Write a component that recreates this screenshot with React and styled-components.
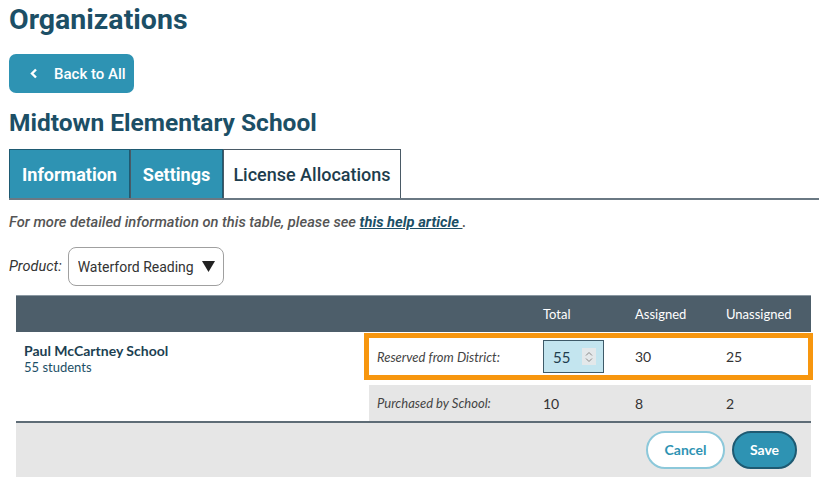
import React from "react";
import styled, { createGlobalStyle } from "styled-components";

const GlobalStyle = createGlobalStyle`
  html, body { margin: 0; padding: 0; background: #fff; }
  body { font-family: Roboto, "Open Sans", sans-serif; color: #333; }
  * { box-sizing: border-box; }
`;

const Page = styled.div`
  padding: 0 0 0 9px;
  width: 819px;
`;

const Title = styled.h1`
  margin: 0;
  padding-top: 3px;
  font-family: Roboto, sans-serif;
  font-size: 28.5px;
  font-weight: 700;
  color: #1c4f66;
  line-height: 34px;
`;

const BackButton = styled.button`
  margin-top: 17px;
  width: 125px;
  height: 39px;
  border: none;
  border-radius: 7px;
  background: #2e93b3;
  color: #fff;
  font-family: Roboto, sans-serif;
  font-size: 15px;
  font-weight: 500;
  display: flex;
  align-items: center;
  padding: 0 0 0 21px;
  gap: 16px;
  cursor: pointer;
`;

const SchoolTitle = styled.h2`
  margin: 16px 0 0;
  font-family: Roboto, sans-serif;
  font-size: 24.5px;
  font-weight: 700;
  color: #1c4f66;
  line-height: 28px;
`;

const Tabs = styled.div`
  margin-top: 12px;
  display: flex;
  border-bottom: 2px solid #6a7883;
  height: 51px;
`;

const Tab = styled.div`
  width: ${(p) => p.$w}px;
  display: flex;
  align-items: center;
  justify-content: center;
  font-family: Roboto, sans-serif;
  font-size: 18px;
  font-weight: ${(p) => (p.$active ? 500 : 700)};
  background: ${(p) => (p.$active ? "#fff" : "#2e93b3")};
  color: ${(p) => (p.$active ? "#1d3d4d" : "#fff")};
  border: 1px solid ${(p) => (p.$active ? "#4a5a66" : "#1e5a72")};
  border-bottom: none;
  & + & { border-left: ${(p) => (p.$active ? "1px solid #4a5a66" : "none")}; }
`;

const HelpText = styled.p`
  margin: 13px 0 0;
  font-family: Roboto, sans-serif;
  font-size: 14.7px;
  font-style: italic;
  font-weight: 500;
  color: #555;
  a { color: #1c4f66; font-weight: 700; text-decoration: underline; }
`;

const ProductRow = styled.div`
  margin-top: 16px;
  display: flex;
  align-items: center;
  gap: 6px;
`;

const Label = styled.span`
  font-family: Roboto, sans-serif;
  font-size: 14.5px;
  font-style: italic;
  color: #333;
`;

const Select = styled.div`
  width: 156px;
  height: 39px;
  border: 1px solid #a0a0a0;
  border-radius: 8px;
  display: flex;
  align-items: center;
  padding: 0 8px 0 9px;
  gap: 7px;
  font-family: Roboto, sans-serif;
  font-size: 14px;
  color: #333;
`;

const SelectText = styled.span`
  flex: 1;
  overflow: hidden;
  white-space: nowrap;
`;

const Table = styled.div`
  margin: 9px 0 0 7px;
  width: 795px;
  font-family: Lato, sans-serif;
  font-size: 14px;
  color: #333;
`;

const HeaderRow = styled.div`
  height: 37px;
  background: #4d5e6a;
  border-top: 1px solid #8a98a2;
  display: grid;
  grid-template-columns: 527px 92px 91px 1fr;
  align-items: center;
  color: #fff;
  font-size: 13px;
`;

const Body = styled.div`
  display: grid;
  grid-template-columns: 353px 442px;
  border-bottom: 2px solid #5e6c76;
`;

const SchoolInfo = styled.div`
  padding: 10px 0 0 8px;
`;

const SchoolName = styled.div`
  font-weight: 700;
  font-size: 14px;
  color: #1c3f52;
  line-height: 17px;
`;

const Students = styled.div`
  font-size: 13px;
  color: #1c4f66;
  line-height: 17px;
`;

const Rows = styled.div`
  padding: 6px 0 0;
  display: flex;
  flex-direction: column;
  gap: 10px;
`;

const Row = styled.div`
  display: grid;
  grid-template-columns: 174px 92px 91px 1fr;
  align-items: center;
  height: ${(p) => (p.$highlight ? 37 : 36)}px;
  background: ${(p) => (p.$highlight ? "#fff" : "#e6e6e6")};
  outline: ${(p) => (p.$highlight ? "5px solid #f7960e" : "none")};
  margin-right: ${(p) => (p.$highlight ? 3 : 0)}px;
  font-size: 14px;
  color: #333;
`;

const RowLabel = styled.span`
  padding-left: 8px;
  font-style: italic;
  font-size: 13px;
  color: #444;
`;

const NumInput = styled.div`
  width: 61px;
  height: 33px;
  background: #c3e5ef;
  border: 1px solid #3e5a68;
  display: flex;
  align-items: center;
  justify-content: space-between;
  padding: 0 7px 0 9px;
  font-size: 15px;
  color: #1d3d4d;
`;

const Spinner = styled.span`
  width: 14px;
  height: 17px;
  background: #e3e8ea;
  display: flex;
  align-items: center;
  justify-content: center;
`;

const Footer = styled.div`
  height: 54px;
  background: #e6e6e6;
  display: flex;
  justify-content: flex-end;
  align-items: center;
  gap: 7px;
  padding-right: 14px;
  padding-bottom: 1px;
`;

const PillButton = styled.button`
  height: 38px;
  width: ${(p) => p.$w}px;
  border-radius: 19px;
  font-family: Lato, sans-serif;
  font-size: 14px;
  font-weight: 700;
  cursor: pointer;
  background: ${(p) => (p.$primary ? "#2e93b3" : "#fff")};
  color: ${(p) => (p.$primary ? "#fff" : "#2e93b3")};
  border: ${(p) => (p.$primary ? "2px solid #1e5a72" : "2px solid #8cc8da")};
`;

export default function App() {
  return (
    <>
      <GlobalStyle />
      <Page>
        <Title>Organizations</Title>
        <BackButton>
          <svg width="8" height="11" viewBox="0 0 8 11">
            <path d="M6 1.5L2 5.5l4 4" stroke="#fff" strokeWidth="2.4" fill="none" />
          </svg>
          Back to All
        </BackButton>
        <SchoolTitle>Midtown Elementary School</SchoolTitle>
        <Tabs>
          <Tab $w={121}>Information</Tab>
          <Tab $w={93}>Settings</Tab>
          <Tab $w={178} $active>License Allocations</Tab>
        </Tabs>
        <HelpText>
          For more detailed information on this table, please see <a href="#">this help article </a>.
        </HelpText>
        <ProductRow>
          <Label>Product:</Label>
          <Select>
            <SelectText>Waterford Reading Academy</SelectText>
            <svg width="13" height="11" viewBox="0 0 13 11">
              <path d="M0 0h13L6.5 11z" fill="#222" />
            </svg>
          </Select>
        </ProductRow>
        <Table>
          <HeaderRow>
            <span />
            <span>Total</span>
            <span>Assigned</span>
            <span>Unassigned</span>
          </HeaderRow>
          <Body>
            <SchoolInfo>
              <SchoolName>Paul McCartney School</SchoolName>
              <Students>55 students</Students>
            </SchoolInfo>
            <Rows>
              <Row $highlight>
                <RowLabel>Reserved from District:</RowLabel>
                <NumInput>
                  55
                  <Spinner>
                    <svg width="8" height="12" viewBox="0 0 8 12">
                      <path d="M1 4.5L4 1.5l3 3M1 7.5l3 3 3-3" stroke="#888" strokeWidth="1" fill="none" />
                    </svg>
                  </Spinner>
                </NumInput>
                <span>30</span>
                <span>25</span>
              </Row>
              <Row>
                <RowLabel>Purchased by School:</RowLabel>
                <span>10</span>
                <span>8</span>
                <span>2</span>
              </Row>
            </Rows>
          </Body>
          <Footer>
            <PillButton $w={79}>Cancel</PillButton>
            <PillButton $w={65} $primary>Save</PillButton>
          </Footer>
        </Table>
      </Page>
    </>
  );
}
